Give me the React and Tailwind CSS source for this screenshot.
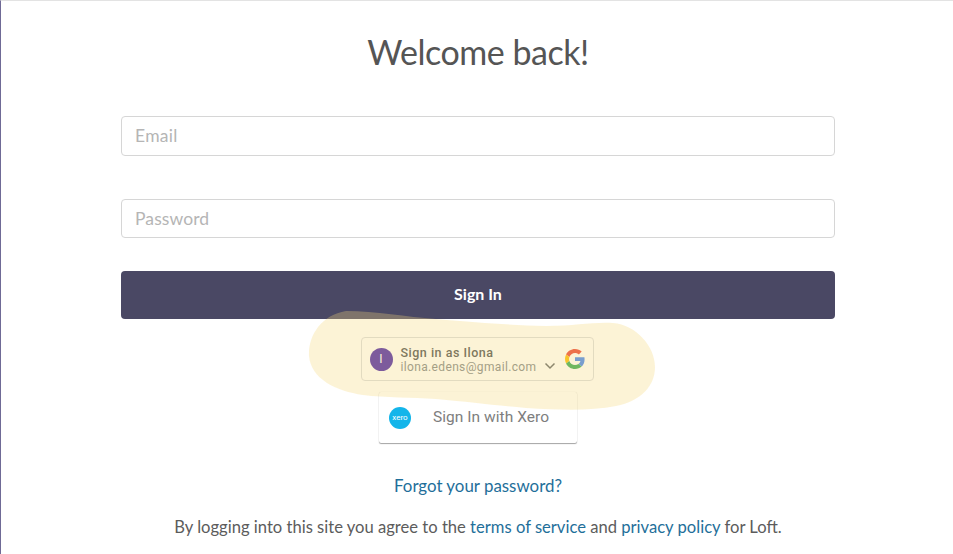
export default function App() {
  const lato = { fontFamily: "Lato, 'Noto Sans', sans-serif" };
  const roboto = { fontFamily: "Roboto, 'Liberation Sans', sans-serif" };
  return (
    <div className="relative w-[953px] h-[554px] overflow-hidden bg-white border-l border-l-[#6f6a96] border-t border-t-[#e3e3e3]" style={lato}>
      <div className="flex flex-col items-stretch w-[714px] ml-[120px]">
        <h1 className="mt-[29px] h-[46px] leading-[44px] text-center text-[34px] tracking-[-0.48px] text-[#555555]">Welcome back!</h1>
        <div className="mt-[40px] h-[40px] pt-[1px] rounded-[4px] border border-[#d6d6d6] px-[13px] flex items-center text-[17.5px] tracking-[0.3px] text-[#b5b5b5]">Email</div>
        <div className="mt-[43px] h-[39px] pt-[1px] rounded-[4px] border border-[#d6d6d6] px-[13px] flex items-center text-[17.5px] tracking-[0.1px] text-[#b5b5b5]">Password</div>
        <button className="mt-[33px] h-[48px] pb-[2px] rounded-[4px] bg-[#4a4864] text-white text-[16px] font-bold">Sign In</button>
        <div className="self-center mt-[18px] mr-[2px] w-[233px] h-[44px] rounded-[4px] border border-[#dadce0] flex items-center pl-[8px] pr-[8px]" style={roboto}>
          <div className="w-[23px] h-[23px] rounded-full bg-[#4724ab] text-white text-[12px] flex items-center justify-center">I</div>
          <div className="ml-[8px] flex flex-col flex-1">
            <span className="text-[12.5px] leading-[15px] font-medium tracking-[0.5px] text-[#4a4e53] whitespace-nowrap">Sign in as Ilona</span>
            <span className="text-[12px] leading-[14px] tracking-[0.35px] text-[#80868b] whitespace-nowrap">ilona.edens@gmail.com</span>
          </div>
          <svg width="12" height="12" viewBox="0 0 12 12" className="mt-[14px] mr-[9px]" fill="none" stroke="#5f6368" strokeWidth="1.5"><path d="M1.5 3.5 6 8l4.5-4.5" /></svg>
          <svg width="20" height="20" viewBox="0 0 48 48">
            <path fill="#EA4335" d="M24 9.5c3.54 0 6.71 1.22 9.21 3.6l6.85-6.85C35.9 2.38 30.47 0 24 0 14.62 0 6.51 5.38 2.56 13.22l7.98 6.19C12.43 13.72 17.74 9.5 24 9.5z" />
            <path fill="#4285F4" d="M46.98 24.55c0-1.57-.15-3.09-.38-4.55H24v9.02h12.94c-.58 2.96-2.26 5.48-4.78 7.18l7.73 6c4.51-4.18 7.09-10.36 7.09-17.65z" />
            <path fill="#FBBC05" d="M10.53 28.59c-.48-1.45-.76-2.99-.76-4.59s.27-3.14.76-4.59l-7.98-6.19C.92 16.46 0 20.12 0 24c0 3.88.92 7.54 2.56 10.78l7.97-6.19z" />
            <path fill="#34A853" d="M24 48c6.48 0 11.93-2.13 15.89-5.81l-7.73-6c-2.15 1.45-4.92 2.3-8.16 2.3-6.26 0-11.57-4.22-13.47-9.91l-7.98 6.19C6.51 42.62 14.62 48 24 48z" />
          </svg>
        </div>
        <div className="self-center mt-[11px] w-[198px] h-[51px] rounded-[2px] bg-white shadow-[0_1px_1px_rgba(0,0,0,0.35),0_0_1px_rgba(0,0,0,0.18)] flex items-center pl-[10px]" style={roboto}>
          <div className="w-[22px] h-[22px] rounded-full bg-[#13b5ea] text-white text-[8px] flex items-center justify-center">xero</div>
          <span className="ml-[22px] text-[15.5px] tracking-[0.05px] text-[#7e7e7e] whitespace-nowrap">Sign In with Xero</span>
        </div>
        <a className="mt-[32px] h-[22px] leading-[22px] text-center text-[16.9px] text-[#1f6f9a]">Forgot your password?</a>
        <p className="mt-[19px] h-[22px] leading-[22px] text-center text-[16.6px] text-[#5c5c5c] whitespace-nowrap">
          By logging into this site you agree to the <a className="text-[#1f6f9a]">terms of service</a> and <a className="text-[#1f6f9a]">privacy policy</a> for Loft.
        </p>
      </div>
      <svg className="absolute left-0 top-0 pointer-events-none" width="953" height="554" viewBox="0 0 953 554">
        <path
          fill="#f5d87a"
          fillOpacity="0.31"
          d="M345 310 C375 310 405 316 435 318 C480 322 510 324 545 325 C575 325 590 321 612 322 C635 324 654 345 654 366 C654 385 640 400 615 405 C590 410 560 409 525 407 C490 404 470 401 435 398 C410 396 385 397 362 394 C335 390 310 378 308 355 C307 335 320 314 345 310 Z"
        />
      </svg>
    </div>
  );
}
